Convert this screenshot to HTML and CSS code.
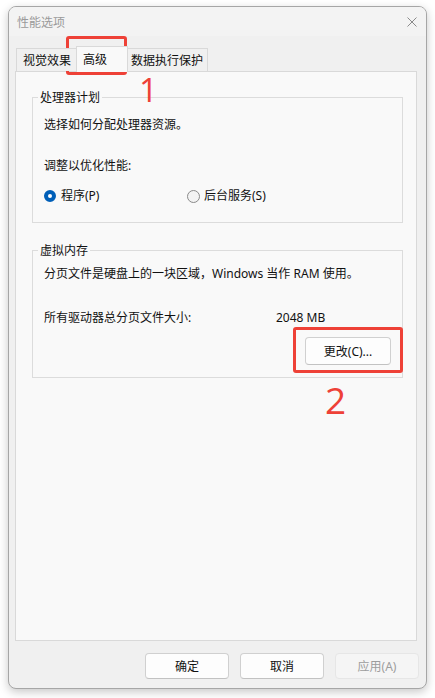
FILE: index.html
```html
<!DOCTYPE html>
<html lang="zh-CN">
<head>
<meta charset="utf-8">
<title>性能选项</title>
<link rel="stylesheet" href="styles.css">
</head>
<body>
<div class="window">
  <div class="titlebar">
    <span class="title">性能选项</span>
    <svg class="close" width="10" height="10" viewBox="0 0 10 10"><path d="M0.5 0.5 L9.5 9.5 M9.5 0.5 L0.5 9.5" stroke="#8a8a8a" stroke-width="1" fill="none"/></svg>
  </div>
  <div class="content">
    <div class="tabs">
      <div class="tab tab-visual">视觉效果</div>
      <div class="tab tab-active">高级</div>
      <div class="tab tab-dep">数据执行保护</div>
    </div>
    <div class="panel">
      <fieldset class="group group-cpu">
        <legend>处理器计划</legend>
        <div class="line">选择如何分配处理器资源。</div>
        <div class="line line-adjust">调整以优化性能:</div>
        <div class="radios">
          <label class="radio"><span class="dot checked"></span>程序(P)</label>
          <label class="radio"><span class="dot"></span>后台服务(S)</label>
        </div>
      </fieldset>
      <fieldset class="group group-vm">
        <legend>虚拟内存</legend>
        <div class="line">分页文件是硬盘上的一块区域，Windows 当作 RAM 使用。</div>
        <div class="line size-row"><span class="size-label">所有驱动器总分页文件大小:</span><span>2048 MB</span></div>
        <div class="change-row"><button class="btn btn-change">更改(C)...</button></div>
      </fieldset>
    </div>
    <div class="actions">
      <button class="btn">确定</button>
      <button class="btn">取消</button>
      <button class="btn btn-disabled">应用(A)</button>
    </div>
  </div>
</div>
<div class="mark mark-box1"></div>
<div class="mark-num mark-num1">1</div>
<div class="mark mark-box2"></div>
<div class="mark-num mark-num2">2</div>
</body>
</html>
```
FILE: styles.css
```css
html, body {
  margin: 0;
  padding: 0;
  background: #ffffff;
}
body {
  position: relative;
  width: 435px;
  height: 698px;
  overflow: hidden;
  font-family: "Noto Sans", "Noto Sans CJK SC", sans-serif;
  font-size: 12px;
  line-height: 16px;
  color: #111;
}
.window {
  margin: 6px 0 0 8px;
  width: 419px;
  height: 683px;
  box-sizing: border-box;
  border: 1px solid #a6a6a6;
  border-radius: 8px;
  background: #f0f0f0;
  box-shadow: 0 3px 10px rgba(0,0,0,0.22);
  display: flex;
  flex-direction: column;
  overflow: hidden;
}
.titlebar {
  height: 29px;
  flex: none;
  background: #f3f3f3;
  display: flex;
  align-items: center;
  justify-content: space-between;
  padding: 0 9px 0 8px;
}
.title {
  color: #9a9a9a;
  font-family: "Noto Sans CJK SC", sans-serif;
}
.close { display: block; }
.content {
  flex: 1;
  display: flex;
  flex-direction: column;
  padding: 10px 9px 0 6px;
}
.tabs {
  display: flex;
  align-items: flex-end;
  height: 26px;
  margin-left: 1px;
  margin-bottom: -1px;
  position: relative;
  z-index: 1;
}
.tab {
  box-sizing: border-box;
  height: 23px;
  margin-bottom: 1px;
  border: 1px solid #d9d9d9;
  border-bottom: none;
  background: #f0f0f0;
  padding-top: 3px;
  white-space: nowrap;
  font-family: "Noto Sans CJK SC", sans-serif;
}
.tab-visual {
  width: 60px;
  padding-left: 6px;
  border-right: none;
}
.tab-active {
  width: 52px;
  height: 26px;
  margin-bottom: 0;
  padding-left: 6px;
  padding-top: 4px;
  background: #f9f9f9;
}
.tab-dep {
  width: 80px;
  padding-left: 3px;
  border-left: none;
}
.panel {
  flex: none;
  height: 570px;
  box-sizing: border-box;
  background: #f9f9f9;
  border: 1px solid #d9d9d9;
  padding: 17px 13px 0 16px;
}
.group {
  margin: 0;
  border: 1px solid #dcdcdc;
  padding: 12px 12px 18px 11px;
  min-width: 0;
}
.group legend {
  margin-left: -6px;
  padding: 0 2px;
  line-height: 16px;
  font-family: "Noto Sans CJK SC", sans-serif;
}
.group-vm {
  margin-top: 19px;
  padding: 8px 11px 12px 11px;
}
.line { white-space: nowrap; }
.line-adjust { margin-top: 25px; }
.radios {
  margin-top: 14px;
  display: grid;
  grid-template-columns: 143px auto;
}
.radio {
  display: flex;
  align-items: center;
  gap: 4px;
}
.dot {
  box-sizing: border-box;
  width: 13px;
  height: 13px;
  border-radius: 50%;
  border: 1px solid #8a8a8a;
  background: #f3f3f3;
}
.dot.checked {
  width: 12px;
  height: 12px;
  border: 4px solid #005fb8;
  background: #ffffff;
  margin-right: 1px;
}
.size-row {
  margin-top: 28px;
  display: grid;
  grid-template-columns: 232px auto;
}
.change-row {
  margin-top: 11px;
  display: flex;
  justify-content: flex-end;
}
.btn {
  box-sizing: border-box;
  width: 84px;
  height: 26px;
  border: 1px solid #d0d0d0;
  border-bottom-color: #c2c2c2;
  border-radius: 4px;
  background: #fdfdfd;
  font-family: "Noto Sans", "Noto Sans CJK SC", sans-serif;
  font-size: 12px;
  color: #111;
  padding: 0;
}
.btn-change {
  width: 86px;
  height: 28px;
}
.btn-disabled {
  background: #f5f5f5;
  border-color: #e6e6e6;
  color: #9d9d9d;
}
.actions {
  margin-top: 12px;
  margin-right: -2px;
  display: flex;
  justify-content: flex-end;
  gap: 11px;
}
.mark {
  position: absolute;
  box-sizing: border-box;
  border: 3px solid #ee4137;
  border-radius: 3px;
}
.mark-box1 {
  left: 66px;
  top: 36px;
  width: 61px;
  height: 39px;
}
.mark-box2 {
  left: 293px;
  top: 327px;
  width: 110px;
  height: 46px;
}
.mark-num {
  position: absolute;
  color: #ee4137;
  font-family: "Open Sans", sans-serif;
  line-height: 1;
}
.mark-num1 {
  left: 139px;
  top: 73px;
  font-size: 33px;
}
.mark-num2 {
  left: 325px;
  top: 381px;
  font-size: 37px;
}
```
